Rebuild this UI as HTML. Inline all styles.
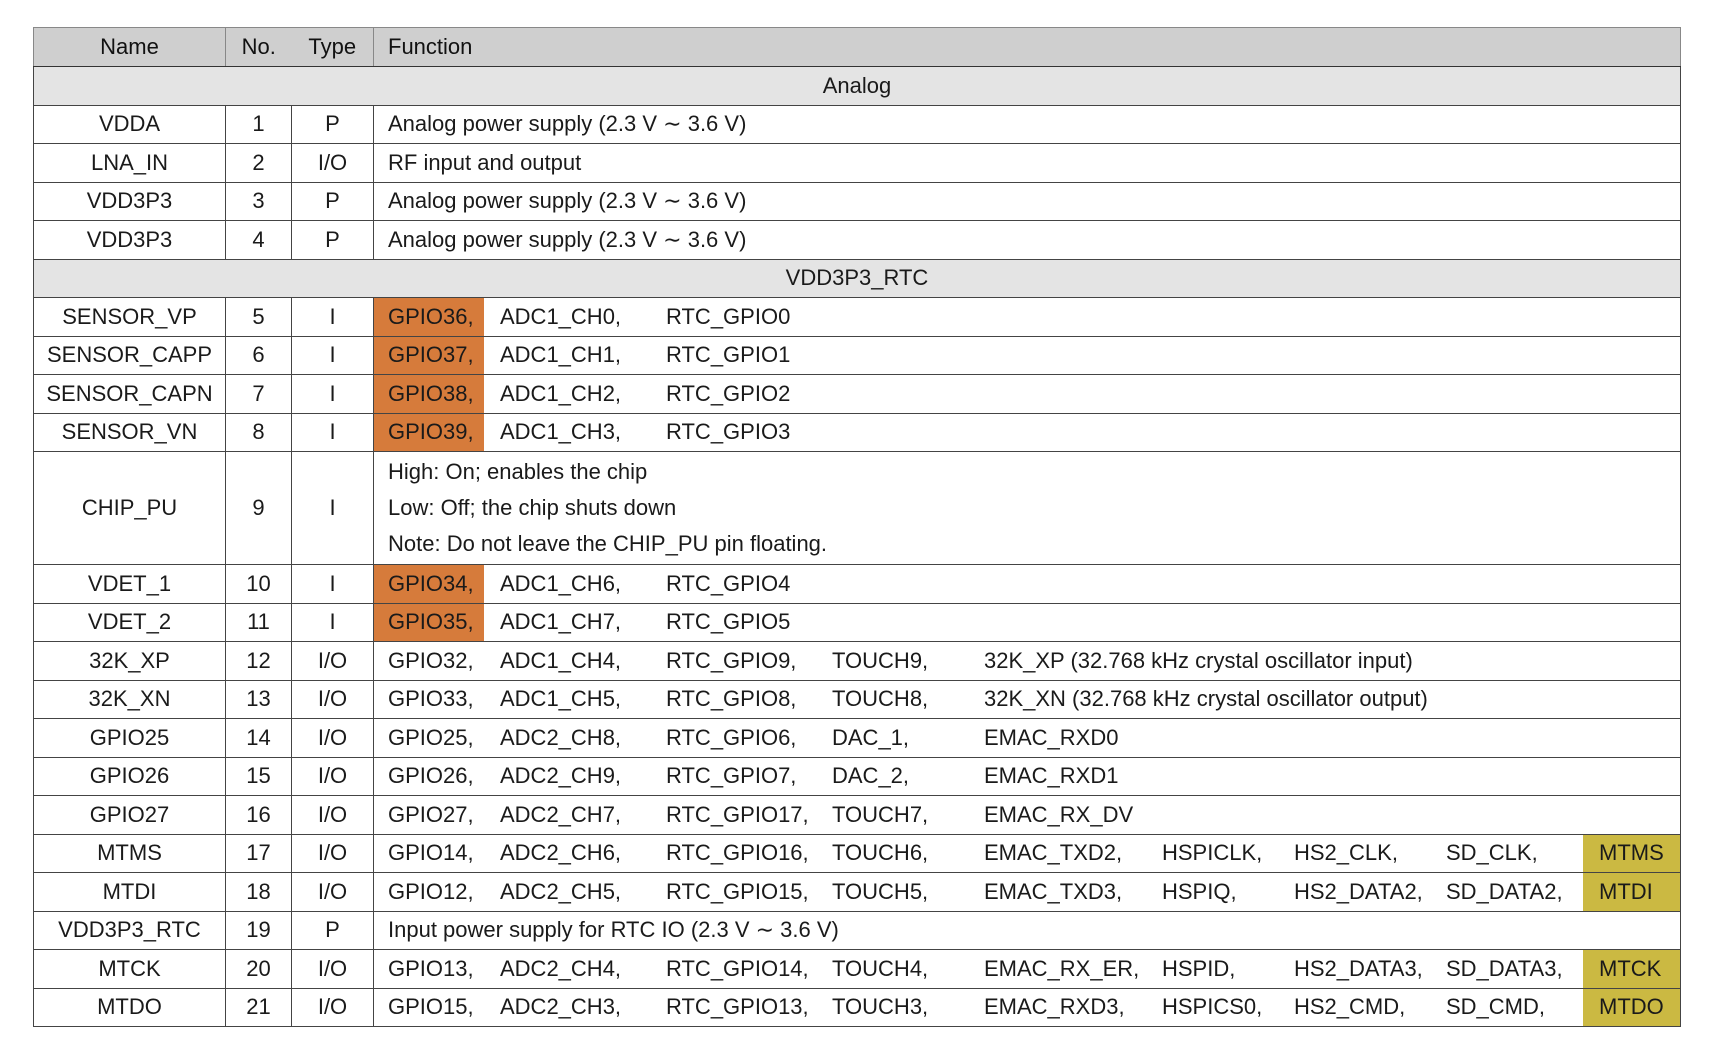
<!DOCTYPE html>
<html><head><meta charset="utf-8"><style>
body{margin:0;background:#fff;width:1713px;height:1055px;overflow:hidden;font-family:"Liberation Sans",sans-serif;color:#1a1a1a}
table{position:absolute;left:33px;top:27px;border-collapse:collapse;table-layout:fixed;width:1648px;font-size:22px}
td,th{border:1px solid #444;padding:0;text-align:center;white-space:nowrap;overflow:hidden}
th{background:#cfcfcf;font-weight:normal;height:38px;color:#111;border-color:#888 #888 #333 #888}
tr{height:38.5px}
.sec td{background:#e4e4e4;text-align:center}
td.f{position:relative;text-align:left}
td.f span{position:absolute;top:50%;transform:translateY(-50%)}
.o{background:#d67b3b;position:absolute;left:0;top:0;bottom:0;width:110px}
.g{background:#cbb942;position:absolute;left:1209px;top:0;bottom:0;right:0}
.c0{left:14px}.c1{left:126px}.c2{left:292px}.c3{left:458px}.c4{left:610px}.c5{left:788px}.c6{left:920px}.c7{left:1072px}.c8{left:1225px}
.chip td.f div{padding-left:14px;line-height:36px}
</style></head><body>
<table>
<colgroup><col style="width:192px"><col style="width:66px"><col style="width:82px"><col></colgroup>
<tr><th>Name</th><th style="border-right:none">No.</th><th style="border-left:none">Type</th><th style="text-align:left;padding-left:14px">Function</th></tr>
<tr class="sec"><td colspan="4">Analog</td></tr>
<tr><td>VDDA</td><td>1</td><td>P</td><td class="f"><span class="c0">Analog power supply (2.3 V ∼ 3.6 V)</span></td></tr>
<tr><td>LNA_IN</td><td>2</td><td>I/O</td><td class="f"><span class="c0">RF input and output</span></td></tr>
<tr><td>VDD3P3</td><td>3</td><td>P</td><td class="f"><span class="c0">Analog power supply (2.3 V ∼ 3.6 V)</span></td></tr>
<tr><td>VDD3P3</td><td>4</td><td>P</td><td class="f"><span class="c0">Analog power supply (2.3 V ∼ 3.6 V)</span></td></tr>
<tr class="sec"><td colspan="4">VDD3P3_RTC</td></tr>
<tr><td>SENSOR_VP</td><td>5</td><td>I</td><td class="f"><div class="o"></div><span class="c0">GPIO36,</span><span class="c1">ADC1_CH0,</span><span class="c2">RTC_GPIO0</span></td></tr>
<tr><td>SENSOR_CAPP</td><td>6</td><td>I</td><td class="f"><div class="o"></div><span class="c0">GPIO37,</span><span class="c1">ADC1_CH1,</span><span class="c2">RTC_GPIO1</span></td></tr>
<tr><td>SENSOR_CAPN</td><td>7</td><td>I</td><td class="f"><div class="o"></div><span class="c0">GPIO38,</span><span class="c1">ADC1_CH2,</span><span class="c2">RTC_GPIO2</span></td></tr>
<tr><td>SENSOR_VN</td><td>8</td><td>I</td><td class="f"><div class="o"></div><span class="c0">GPIO39,</span><span class="c1">ADC1_CH3,</span><span class="c2">RTC_GPIO3</span></td></tr>
<tr class="chip" style="height:113px"><td>CHIP_PU</td><td>9</td><td>I</td><td class="f"><div>High: On; enables the chip</div><div>Low: Off; the chip shuts down</div><div>Note: Do not leave the CHIP_PU pin floating.</div></td></tr>
<tr><td>VDET_1</td><td>10</td><td>I</td><td class="f"><div class="o"></div><span class="c0">GPIO34,</span><span class="c1">ADC1_CH6,</span><span class="c2">RTC_GPIO4</span></td></tr>
<tr><td>VDET_2</td><td>11</td><td>I</td><td class="f"><div class="o"></div><span class="c0">GPIO35,</span><span class="c1">ADC1_CH7,</span><span class="c2">RTC_GPIO5</span></td></tr>
<tr><td>32K_XP</td><td>12</td><td>I/O</td><td class="f"><span class="c0">GPIO32,</span><span class="c1">ADC1_CH4,</span><span class="c2">RTC_GPIO9,</span><span class="c3">TOUCH9,</span><span class="c4">32K_XP (32.768 kHz crystal oscillator input)</span></td></tr>
<tr><td>32K_XN</td><td>13</td><td>I/O</td><td class="f"><span class="c0">GPIO33,</span><span class="c1">ADC1_CH5,</span><span class="c2">RTC_GPIO8,</span><span class="c3">TOUCH8,</span><span class="c4">32K_XN (32.768 kHz crystal oscillator output)</span></td></tr>
<tr><td>GPIO25</td><td>14</td><td>I/O</td><td class="f"><span class="c0">GPIO25,</span><span class="c1">ADC2_CH8,</span><span class="c2">RTC_GPIO6,</span><span class="c3">DAC_1,</span><span class="c4">EMAC_RXD0</span></td></tr>
<tr><td>GPIO26</td><td>15</td><td>I/O</td><td class="f"><span class="c0">GPIO26,</span><span class="c1">ADC2_CH9,</span><span class="c2">RTC_GPIO7,</span><span class="c3">DAC_2,</span><span class="c4">EMAC_RXD1</span></td></tr>
<tr><td>GPIO27</td><td>16</td><td>I/O</td><td class="f"><span class="c0">GPIO27,</span><span class="c1">ADC2_CH7,</span><span class="c2">RTC_GPIO17,</span><span class="c3">TOUCH7,</span><span class="c4">EMAC_RX_DV</span></td></tr>
<tr><td>MTMS</td><td>17</td><td>I/O</td><td class="f"><div class="g"></div><span class="c0">GPIO14,</span><span class="c1">ADC2_CH6,</span><span class="c2">RTC_GPIO16,</span><span class="c3">TOUCH6,</span><span class="c4">EMAC_TXD2,</span><span class="c5">HSPICLK,</span><span class="c6">HS2_CLK,</span><span class="c7">SD_CLK,</span><span class="c8">MTMS</span></td></tr>
<tr><td>MTDI</td><td>18</td><td>I/O</td><td class="f"><div class="g"></div><span class="c0">GPIO12,</span><span class="c1">ADC2_CH5,</span><span class="c2">RTC_GPIO15,</span><span class="c3">TOUCH5,</span><span class="c4">EMAC_TXD3,</span><span class="c5">HSPIQ,</span><span class="c6">HS2_DATA2,</span><span class="c7">SD_DATA2,</span><span class="c8">MTDI</span></td></tr>
<tr><td>VDD3P3_RTC</td><td>19</td><td>P</td><td class="f"><span class="c0">Input power supply for RTC IO (2.3 V ∼ 3.6 V)</span></td></tr>
<tr><td>MTCK</td><td>20</td><td>I/O</td><td class="f"><div class="g"></div><span class="c0">GPIO13,</span><span class="c1">ADC2_CH4,</span><span class="c2">RTC_GPIO14,</span><span class="c3">TOUCH4,</span><span class="c4">EMAC_RX_ER,</span><span class="c5">HSPID,</span><span class="c6">HS2_DATA3,</span><span class="c7">SD_DATA3,</span><span class="c8">MTCK</span></td></tr>
<tr><td>MTDO</td><td>21</td><td>I/O</td><td class="f"><div class="g"></div><span class="c0">GPIO15,</span><span class="c1">ADC2_CH3,</span><span class="c2">RTC_GPIO13,</span><span class="c3">TOUCH3,</span><span class="c4">EMAC_RXD3,</span><span class="c5">HSPICS0,</span><span class="c6">HS2_CMD,</span><span class="c7">SD_CMD,</span><span class="c8">MTDO</span></td></tr>
</table>
</body></html>
